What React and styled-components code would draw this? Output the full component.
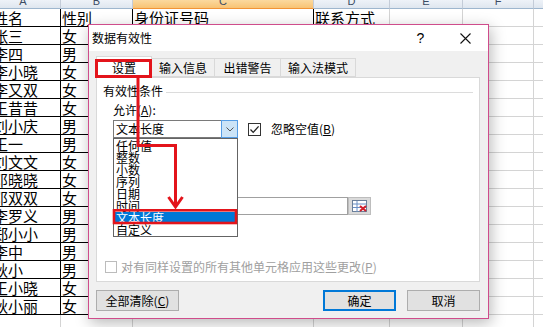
import React from "react"
import styled, { createGlobalStyle } from "styled-components"

const GlobalStyle = createGlobalStyle`
  html, body {
    margin: 0;
    padding: 0;
    background: #ffffff;
  }
  body {
    font-family: "Noto Sans CJK SC", "Liberation Sans", sans-serif;
  }
`

const Screen = styled.div`
  position: relative;
  width: 543px;
  height: 327px;
  overflow: hidden;
  background: #fff;
`

/* ---------- spreadsheet behind the dialog ---------- */

const Sheet = styled.div`
  display: grid;
  grid-template-columns: 61px 72px 181px 76px 73px 71px 30px;
  grid-template-rows: 9px repeat(18, 18px);
`

const ColHead = styled.div`
  box-sizing: border-box;
  height: 9px;
  overflow: hidden;
  border-right: 1px solid #c4ccd8;
  border-bottom: 1px solid ${p => (p.$active ? "#f29436" : "#9eb6ce")};
  background: ${p =>
    p.$active
      ? "linear-gradient(#fbd99f, #f8c374)"
      : "linear-gradient(#eef2f8, #dfe6ef)"};
  padding-right: ${p => (p.$first ? "14px" : "0")};
`

const Letter = styled.span`
  display: block;
  margin-top: -5px;
  font-family: "Liberation Sans", sans-serif;
  font-size: 11px;
  line-height: 12px;
  color: #3b4b63;
  text-align: center;
`

const Cell = styled.div`
  box-sizing: border-box;
  height: 18px;
  padding-left: 1px;
  border-right: 1px solid ${p => p.$line || "#d4d4d4"};
  border-bottom: 1px solid ${p => p.$line || "#d4d4d4"};
  font-size: 15px;
  line-height: 17px;
  color: #000;
  white-space: nowrap;
  overflow: hidden;
  text-indent: ${p => (p.$cut ? "-8px" : "0")};
`

/* ---------- dialog ---------- */

const Dialog = styled.div`
  position: absolute;
  left: 88px;
  top: 24px;
  width: 401px;
  height: 295px;
  box-sizing: border-box;
  border: 1px solid #cf4c8b;
  background: #f0f0f0;
  box-shadow: 2px 4px 14px rgba(0, 0, 0, 0.28);
  display: flex;
  flex-direction: column;
  font-size: 12px;
  color: #000;
`

const TitleBar = styled.div`
  height: 26px;
  flex: none;
  display: flex;
  align-items: center;
  background: #fff;
  padding-left: 3px;
`

const Title = styled.span`
  flex: 1;
  font-size: 12px;
  line-height: 16px;
`

const TitleButton = styled.span`
  width: 45px;
  height: 26px;
  display: flex;
  align-items: center;
  justify-content: center;
  font-family: "Liberation Sans", sans-serif;
  font-size: 14px;
`

const Body = styled.div`
  flex: 1;
  display: flex;
  flex-direction: column;
  padding: 5px 8px 6px 7px;
`

const TabStrip = styled.div`
  height: 21px;
  display: flex;
  align-items: flex-end;
  position: relative;
  z-index: 1;
`

const Tab = styled.div`
  box-sizing: border-box;
  width: ${p => p.$w}px;
  height: ${p => (p.$on ? "22px" : "19px")};
  margin-bottom: ${p => (p.$on ? "-1px" : "0")};
  margin-left: -1px;
  border: 1px solid #d9d9d9;
  border-bottom: ${p => (p.$on ? "none" : "1px solid #d9d9d9")};
  background: ${p => (p.$on ? "#fff" : "#f0f0f0")};
  display: flex;
  align-items: center;
  justify-content: center;
  line-height: 16px;
  &:first-child {
    margin-left: 0;
  }
`

const Panel = styled.div`
  box-sizing: border-box;
  height: 205px;
  flex: none;
  background: #fff;
  border: 1px solid #d9d9d9;
  padding: 5px 6px 0 6px;
  display: flex;
  flex-direction: column;
`

const GroupHeader = styled.div`
  display: flex;
  align-items: center;
  gap: 3px;
  line-height: 16px;
  &::after {
    content: "";
    flex: 1;
    height: 1px;
    margin-top: 2px;
    background: #dcdcdc;
  }
`

const Indent = styled.div`
  margin-left: ${p => p.$x}px;
  margin-top: ${p => p.$y}px;
  line-height: 16px;
`

const Row = styled.div`
  display: flex;
  align-items: center;
  gap: ${p => p.$gap || 0}px;
  margin-left: ${p => p.$x || 0}px;
  margin-top: ${p => p.$y || 0}px;
  color: ${p => (p.$muted ? "#a0a0a0" : "#000")};
  line-height: 16px;
`

const SelectWrap = styled.div`
  position: relative;
  width: 125px;
  height: 18px;
`

const SelectBox = styled.div`
  box-sizing: border-box;
  height: 18px;
  display: flex;
  border: 1px solid #7a7a7a;
  background: #fff;
`

const SelectText = styled.span`
  flex: 1;
  padding-left: 2px;
  line-height: 16px;
`

const DropButton = styled.span`
  box-sizing: border-box;
  width: 17px;
  margin: -1px -1px -1px 0;
  border: 1px solid #569de5;
  background: #cce4f7;
  display: flex;
  align-items: center;
  justify-content: center;
`

const ListBox = styled.ul`
  position: absolute;
  left: 0;
  top: 18px;
  width: 125px;
  height: 99px;
  box-sizing: border-box;
  margin: 0;
  padding: 1px 0 0 0;
  list-style: none;
  background: #fff;
  border: 1px solid #646464;
  z-index: 2;
`

const ListItem = styled.li`
  height: 12px;
  padding-left: 2px;
  font-size: 12px;
  line-height: 12px;
  white-space: nowrap;
  background: ${p => (p.$on ? "#0078d7" : "transparent")};
  color: ${p => (p.$on ? "#fff" : "#000")};
`

const CheckBox = styled.span`
  box-sizing: border-box;
  width: ${p => p.$size}px;
  height: ${p => p.$size}px;
  flex: none;
  border: 1px solid ${p => (p.$off ? "#bcbcbc" : "#333")};
  background: #fff;
  display: flex;
  align-items: center;
  justify-content: center;
`

const Key = styled.span`
  text-decoration: underline;
`

const Field = styled.div`
  box-sizing: border-box;
  width: 235px;
  height: 18px;
  border: 1px solid #a0a0a0;
  background: #fff;
`

const RefButton = styled.span`
  box-sizing: border-box;
  width: 23px;
  height: 18px;
  background: #dadada;
  border: 1px solid #bdbdbd;
  display: flex;
  align-items: center;
  justify-content: center;
`

const ButtonRow = styled.div`
  display: flex;
  gap: 11px;
  margin-top: 8px;
`

const Button = styled.button`
  box-sizing: border-box;
  width: ${p => p.$w}px;
  height: 21px;
  padding: 0;
  margin: 0;
  font-family: inherit;
  font-size: 12px;
  line-height: 16px;
  color: #000;
  background: #e1e1e1;
  border: ${p => (p.$primary ? "2px solid #0078d7" : "1px solid #adadad")};
  margin-left: ${p => (p.$push ? "auto" : "0")};
`

const Marks = styled.svg`
  position: absolute;
  left: 0;
  top: 0;
  pointer-events: none;
  z-index: 5;
`

const people = [
  ["张三", "女"],
  ["李四", "男"],
  ["李小晓", "女"],
  ["李又双", "女"],
  ["王昔昔", "女"],
  ["刘小庆", "男"],
  ["王一", "男"],
  ["刘文文", "女"],
  ["邓晓晓", "女"],
  ["邓双双", "女"],
  ["李罗义", "男"],
  ["郑小小", "男"],
  ["李中", "男"],
  ["秋小", "男"],
  ["王小晓", "女"],
  ["秋小丽", "女"],
]

const options = ["任何值", "整数", "小数", "序列", "日期", "时间", "文本长度", "自定义"]

function Spreadsheet() {
  const letters = ["A", "B", "C", "D", "E", "F", "G"]
  const rows = [["姓名", "性别", "身份证号码", "联系方式"], ...people]
  return (
    <Sheet>
      {letters.map((l, i) => (
        <ColHead key={l} $active={l === "C"} $first={i === 0}>
          <Letter>{l}</Letter>
        </ColHead>
      ))}
      {rows.map((r, i) => (
        <React.Fragment key={i}>
          <Cell $line="#000" $cut>{r[0]}</Cell>
          <Cell $line="#000">{r[1]}</Cell>
          <Cell $line={i === 0 ? "#000" : undefined}>{r[2] || ""}</Cell>
          <Cell>{r[3] || ""}</Cell>
          <Cell />
          <Cell />
          <Cell />
        </React.Fragment>
      ))}
      {letters.map(l => (
        <Cell key={"x" + l} />
      ))}
    </Sheet>
  )
}

function ValidationDialog() {
  return (
    <Dialog>
      <TitleBar>
        <Title>数据有效性</Title>
        <TitleButton>?</TitleButton>
        <TitleButton>
          <svg width="11" height="11" viewBox="0 0 11 11">
            <path d="M0.5 0.5 L10.5 10.5 M10.5 0.5 L0.5 10.5" stroke="#111" strokeWidth="1.1" fill="none" />
          </svg>
        </TitleButton>
      </TitleBar>
      <Body>
        <TabStrip>
          <Tab $w={56} $on>设置</Tab>
          <Tab $w={64}>输入信息</Tab>
          <Tab $w={67}>出错警告</Tab>
          <Tab $w={76}>输入法模式</Tab>
        </TabStrip>
        <Panel>
          <GroupHeader>有效性条件</GroupHeader>
          <Indent $x={10} $y={3}>
            允许(<Key>A</Key>):
          </Indent>
          <Row $x={10} $y={2} $gap={10}>
            <SelectWrap>
              <SelectBox>
                <SelectText>文本长度</SelectText>
                <DropButton>
                  <svg width="8" height="5" viewBox="0 0 8 5">
                    <path d="M0.5 0.5 L4 4 L7.5 0.5" stroke="#555" fill="none" />
                  </svg>
                </DropButton>
              </SelectBox>
              <ListBox>
                {options.map(o => (
                  <ListItem key={o} $on={o === "文本长度"}>
                    {o}
                  </ListItem>
                ))}
              </ListBox>
            </SelectWrap>
            <CheckBox $size={13}>
              <svg width="11" height="11" viewBox="0 0 11 11">
                <path d="M1.5 5.5 L4.2 8.4 L9.6 2.4" stroke="#222" strokeWidth="1.3" fill="none" />
              </svg>
            </CheckBox>
            <span>
              忽略空值(<Key>B</Key>)
            </span>
          </Row>
          <Row $x={10} $y={59}>
            <Field />
            <RefButton>
              <svg width="16" height="13" viewBox="0 0 16 13">
                <rect x="0.5" y="0.5" width="14" height="11" fill="#fff" stroke="#6b7f99" />
                <path d="M1 4 H14 M1 7.5 H14 M5 1 V12" stroke="#6b8fc4" />
                <path d="M8 6 L14 11 M14 6 L8 11" stroke="#d21f2b" strokeWidth="2" />
              </svg>
            </RefButton>
          </Row>
          <Row $x={2} $y={44} $gap={4} $muted>
            <CheckBox $size={12} $off />
            <span>
              对有同样设置的所有其他单元格应用这些更改(<Key>P</Key>)
            </span>
          </Row>
        </Panel>
        <ButtonRow>
          <Button $w={83}>
            全部清除(<Key>C</Key>)
          </Button>
          <Button $w={73} $primary $push>
            确定
          </Button>
          <Button $w={73}>取消</Button>
        </ButtonRow>
      </Body>
    </Dialog>
  )
}

export default function App() {
  return (
    <Screen>
      <GlobalStyle />
      <Spreadsheet />
      <ValidationDialog />
      <Marks width="543" height="327" viewBox="0 0 543 327">
        <g fill="none" stroke="#e3141b" strokeWidth="3">
          <rect x="96.5" y="60.5" width="54" height="16" />
          <path d="M138 78 V145.5 H175.5 V206" />
          <path d="M168.5 197 L175.5 207 L182.5 197" strokeLinejoin="miter" />
        </g>
        <rect x="114" y="210.3" width="122" height="12.7" fill="none" stroke="#e3141b" strokeWidth="2.6" />
      </Marks>
    </Screen>
  )
}
